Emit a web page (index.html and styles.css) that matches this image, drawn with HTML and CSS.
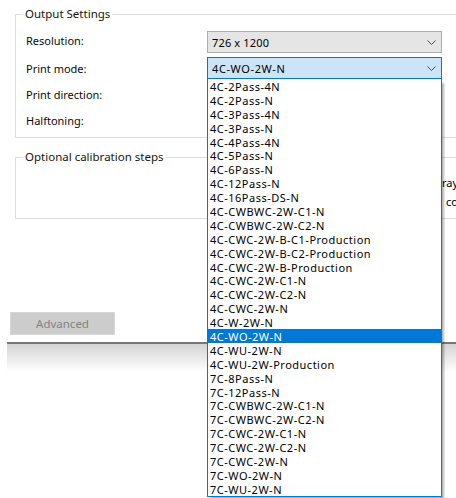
FILE: index.html
```html
<!DOCTYPE html>
<html lang="en">
<head>
<meta charset="utf-8">
<title>Output Settings</title>
<link rel="stylesheet" href="styles.css">
</head>
<body>
<div class="dialog">
  <fieldset class="group group-output">
    <legend>Output Settings</legend>
    <div class="form">
      <span class="label">Resolution:</span>
      <div class="combo">
        <span class="value">726 x 1200</span>
        <svg class="chev" width="9" height="5" viewBox="0 0 9 5"><polyline points="0.5,0.5 4.5,4.5 8.5,0.5"/></svg>
      </div>

      <span class="label">Print mode:</span>
      <div class="combo is-open">
        <span class="value">4C-WO-2W-N</span>
        <svg class="chev" width="9" height="5" viewBox="0 0 9 5"><polyline points="0.5,0.5 4.5,4.5 8.5,0.5"/></svg>
        <ul class="popup">
          <li>4C-2Pass-4N</li>
          <li>4C-2Pass-N</li>
          <li>4C-3Pass-4N</li>
          <li>4C-3Pass-N</li>
          <li>4C-4Pass-4N</li>
          <li>4C-5Pass-N</li>
          <li>4C-6Pass-N</li>
          <li>4C-12Pass-N</li>
          <li>4C-16Pass-DS-N</li>
          <li>4C-CWBWC-2W-C1-N</li>
          <li>4C-CWBWC-2W-C2-N</li>
          <li>4C-CWC-2W-B-C1-Production</li>
          <li>4C-CWC-2W-B-C2-Production</li>
          <li>4C-CWC-2W-B-Production</li>
          <li>4C-CWC-2W-C1-N</li>
          <li>4C-CWC-2W-C2-N</li>
          <li>4C-CWC-2W-N</li>
          <li>4C-W-2W-N</li>
          <li class="is-selected">4C-WO-2W-N</li>
          <li>4C-WU-2W-N</li>
          <li>4C-WU-2W-Production</li>
          <li>7C-8Pass-N</li>
          <li>7C-12Pass-N</li>
          <li>7C-CWBWC-2W-C1-N</li>
          <li>7C-CWBWC-2W-C2-N</li>
          <li>7C-CWC-2W-C1-N</li>
          <li>7C-CWC-2W-C2-N</li>
          <li>7C-CWC-2W-N</li>
          <li>7C-WO-2W-N</li>
          <li>7C-WU-2W-N</li>
        </ul>
      </div>

      <span class="label">Print direction:</span>
      <div class="combo">
        <span class="value"></span>
        <svg class="chev" width="9" height="5" viewBox="0 0 9 5"><polyline points="0.5,0.5 4.5,4.5 8.5,0.5"/></svg>
      </div>

      <span class="label">Halftoning:</span>
      <div class="combo">
        <span class="value"></span>
        <svg class="chev" width="9" height="5" viewBox="0 0 9 5"><polyline points="0.5,0.5 4.5,4.5 8.5,0.5"/></svg>
      </div>
    </div>
  </fieldset>

  <fieldset class="group group-calib">
    <legend>Optional calibration steps</legend>
    <div class="steps">
      <span class="step">Gray balance</span>
      <span class="step step-sub">color check</span>
    </div>
  </fieldset>

  <div class="actions">
    <button class="btn" type="button" disabled>Advanced</button>
  </div>

  <div class="footer"></div>
</div>
</body>
</html>
```

FILE: styles.css
```css
html,
body {
  margin: 0;
  padding: 0;
  background: #ffffff;
  overflow: hidden;
}

body {
  width: 456px;
  height: 498px;
  font-family: "Noto Sans", "Open Sans", sans-serif;
  font-size: 11px;
  color: #000000;
}

.dialog {
  display: flex;
  flex-direction: column;
  align-items: flex-start;
}

/* group boxes */
.group {
  box-sizing: border-box;
  width: 480px;
  margin: 0 0 0 15px;
  padding: 0 0 6px 10px;
  border: 1px solid #dcdcdc;
  min-width: 0;
}

.group legend {
  padding: 0 2px;
  margin-left: -3px;
  line-height: 16px;
  font-size: 11.5px;
  color: #141414;
}

.group-output {
  margin-top: 6px;
}

.group-calib {
  margin-top: 11px;
  padding-bottom: 8px;
}

/* label / combo rows */
.form {
  margin-top: 9px;
  display: grid;
  grid-template-columns: 181px 235px;
  grid-auto-rows: 22px;
  row-gap: 4px;
}

.label {
  align-self: center;
  color: #0a0a0a;
  white-space: nowrap;
}

.label:first-child {
  margin-top: -3px;
}

.combo {
  position: relative;
  box-sizing: border-box;
  height: 22px;
  display: flex;
  align-items: center;
  justify-content: space-between;
  padding: 0 5px 0 4px;
  background: #e5e5e5;
  border: 1px solid #adadad;
}

.combo .value {
  font-size: 11px;
  letter-spacing: 0.15px;
  white-space: nowrap;
}

.combo.is-open {
  background: #cce4f7;
  border-color: #0078d7;
}

.combo.is-open .value {
  letter-spacing: 0.6px;
}

.chev {
  display: block;
}

.chev polyline {
  fill: none;
  stroke: #4a4a4a;
  stroke-width: 1;
}

/* open drop-down list */
.popup {
  position: absolute;
  z-index: 10;
  left: -1px;
  top: 100%;
  box-sizing: border-box;
  width: 235px;
  margin: 0;
  padding: 0;
  list-style: none;
  background: #ffffff;
  border: 1px solid #0078d7;
  box-shadow: 3px 4px 2px -1px rgba(0, 0, 0, 0.3);
}

.popup li {
  height: 13.9px;
  line-height: 15.9px;
  padding-left: 2px;
  font-size: 11px;
  letter-spacing: 0.5px;
  white-space: nowrap;
  color: #000000;
}

.popup li.is-selected {
  background: #0078d7;
  color: #ffffff;
}

/* calibration options */
.steps {
  margin: 10px 0 0 408px;
  display: flex;
  flex-direction: column;
  row-gap: 3px;
}

.step {
  line-height: 16px;
  white-space: nowrap;
}

.step-sub {
  padding-left: 12px;
}

/* buttons */
.actions {
  margin: 93px 0 0 10px;
}

.btn {
  box-sizing: border-box;
  width: 105px;
  height: 23px;
  padding: 0;
  font-family: inherit;
  font-size: 11.5px;
  color: #838383;
  background: #cccccc;
  border: 1px solid #d6d6d6;
}

/* window edge below the dialog */
.footer {
  align-self: stretch;
  margin: 7px 0 0 7px;
  height: 28px;
  border-top: 2px solid #777777;
  background: linear-gradient(#d4d4d4, #ffffff);
}
```
